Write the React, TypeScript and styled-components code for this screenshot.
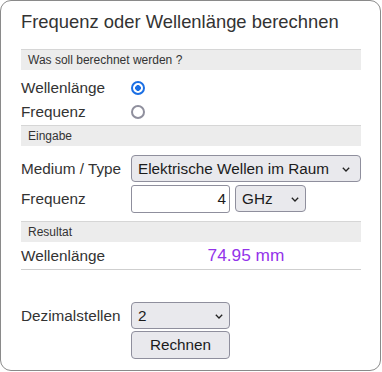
import { useState } from "react";
import styled, { createGlobalStyle } from "styled-components";

const GlobalStyle = createGlobalStyle`
  html, body {
    margin: 0;
    padding: 0;
    background: #fff;
  }
  body {
    font-family: "Liberation Sans", Arial, sans-serif;
    color: #333;
  }
`;

const FONT = `"Liberation Sans", Arial, sans-serif`;

const App = () => {
  const [target, setTarget] = useState("wellenlaenge");
  const [freq, setFreq] = useState("4");

  return (
    <>
      <GlobalStyle />
      <Card>
        <Title>Frequenz oder Wellenlänge berechnen</Title>

        <Band>Was soll berechnet werden ?</Band>
        <RadioGroup>
          <FormRow $height={24}>
            <Label>Wellenlänge</Label>
            <Radio
              name="target"
              checked={target === "wellenlaenge"}
              onChange={() => setTarget("wellenlaenge")}
            />
          </FormRow>
          <FormRow $height={24}>
            <Label>Frequenz</Label>
            <Radio
              name="target"
              checked={target === "frequenz"}
              onChange={() => setTarget("frequenz")}
            />
          </FormRow>
        </RadioGroup>

        <Band>Eingabe</Band>
        <Fields $top={9} $bottom={8} $gap={3}>
          <FormRow $height={27}>
            <Label>Medium / Type</Label>
            <SelectBox width={230} arrowRight={11}>
              <option>Elektrische Wellen im Raum</option>
            </SelectBox>
          </FormRow>
          <FormRow $height={28}>
            <Label>Frequenz</Label>
            <Inline>
              <NumberInput
                type="text"
                value={freq}
                onChange={(e) => setFreq(e.target.value)}
              />
              <SelectBox width={71} arrowRight={7}>
                <option>GHz</option>
              </SelectBox>
            </Inline>
          </FormRow>
        </Fields>

        <Band>Resultat</Band>
        <ResultRow>
          <Label>Wellenlänge</Label>
          <ResultValue>74.95 mm</ResultValue>
        </ResultRow>

        <Fields $top={32} $bottom={0} $gap={2}>
          <FormRow $height={27}>
            <Label>Dezimalstellen</Label>
            <SelectBox width={99} arrowRight={7}>
              <option>2</option>
            </SelectBox>
          </FormRow>
          <FormRow $height={28}>
            <span />
            <Button>Rechnen</Button>
          </FormRow>
        </Fields>
      </Card>
    </>
  );
};

const SelectBox = ({
  width,
  arrowRight,
  children,
}: {
  width: number;
  arrowRight: number;
  children: React.ReactNode;
}) => (
  <SelectWrap $width={width}>
    <Select>{children}</Select>
    <Chevron $right={arrowRight} width="8" height="5" viewBox="0 0 8 5">
      <path d="M0.8 0.8 L4 4 L7.2 0.8" fill="none" stroke="#222" strokeWidth="1.3" />
    </Chevron>
  </SelectWrap>
);

const Card = styled.div`
  box-sizing: border-box;
  width: 381px;
  height: 371px;
  border: 1px solid #8a8a8a;
  border-radius: 11px;
  padding: 10px 19px 0 20px;
`;

const Title = styled.h1`
  margin: 0 0 16px;
  font-size: 18.4px;
  line-height: 22px;
  font-weight: normal;
  color: #333;
`;

const Band = styled.div`
  box-sizing: border-box;
  height: 21px;
  border-top: 1px solid #d6d6d6;
  background: #ececec;
  padding-left: 7px;
  font-size: 12px;
  line-height: 20px;
  color: #333;
`;

const RadioGroup = styled.div`
  padding: 6px 0 1px;
`;

const Fields = styled.div<{ $top: number; $bottom: number; $gap: number }>`
  display: flex;
  flex-direction: column;
  gap: ${({ $gap }) => $gap}px;
  padding: ${({ $top, $bottom }) => `${$top}px 0 ${$bottom}px`};
`;

const FormRow = styled.div<{ $height: number }>`
  display: grid;
  grid-template-columns: 110px 1fr;
  align-items: center;
  height: ${({ $height }) => $height}px;
`;

const Label = styled.span`
  font-size: 15.3px;
  color: #333;
`;

const Radio = styled.input.attrs({ type: "radio" })`
  appearance: none;
  margin: 0;
  width: 14px;
  height: 14px;
  box-sizing: border-box;
  border: 2px solid #8f8f9d;
  border-radius: 50%;
  background: #fff;

  &:checked {
    border-color: #1b6fe4;
    background: radial-gradient(circle, #1b6fe4 0 2.6px, #fff 3.1px);
  }
`;

const Inline = styled.div`
  display: flex;
  gap: 5px;
  height: 28px;
`;

const SelectWrap = styled.div<{ $width: number }>`
  position: relative;
  width: ${({ $width }) => $width}px;
  height: 27px;
`;

const Select = styled.select`
  appearance: none;
  box-sizing: border-box;
  width: 100%;
  height: 100%;
  margin: 0;
  padding: 0 20px 0 6px;
  border: 1px solid #8f8f9d;
  border-radius: 4px;
  background: #e9e9ed;
  font: 15.3px ${FONT};
  color: #1b1b1b;
`;

const Chevron = styled.svg<{ $right: number }>`
  position: absolute;
  right: ${({ $right }) => $right}px;
  top: 12px;
  pointer-events: none;
`;

const NumberInput = styled.input`
  box-sizing: border-box;
  width: 99px;
  height: 28px;
  margin: 0;
  padding: 0 3px;
  border: 1px solid #8f8f9d;
  border-radius: 3px;
  text-align: right;
  font: 15.3px ${FONT};
  color: #1b1b1b;
  background: #fff;
`;

const ResultRow = styled.div`
  display: grid;
  grid-template-columns: 110px 1fr;
  align-items: center;
  height: 27px;
  border-bottom: 1px solid #cfcfcf;
`;

const ResultValue = styled.span`
  text-align: center;
  font-size: 17.3px;
  color: #9333ea;
`;

const Button = styled.button`
  box-sizing: border-box;
  width: 99px;
  height: 28px;
  margin: 0;
  padding: 0;
  border: 1px solid #8f8f9d;
  border-radius: 4px;
  background: #e9e9ed;
  font: 15.3px ${FONT};
  color: #1b1b1b;
`;

export default App;
